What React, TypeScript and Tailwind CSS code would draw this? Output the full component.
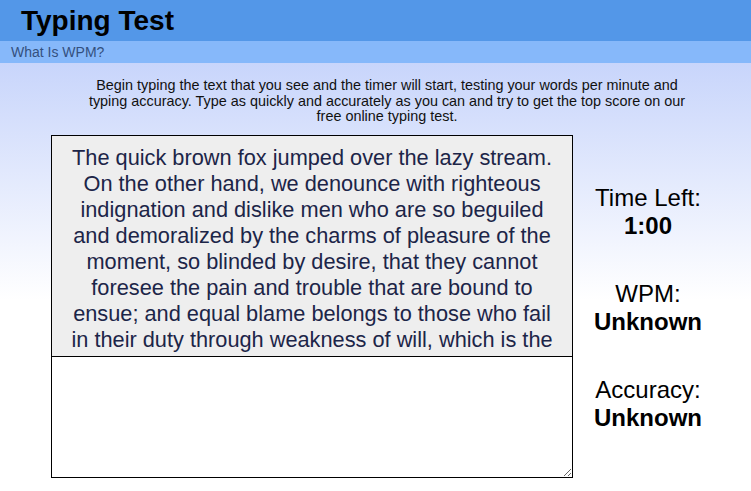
const passage =
  "The quick brown fox jumped over the lazy stream. On the other hand, we denounce with righteous indignation and dislike men who are so beguiled and demoralized by the charms of pleasure of the moment, so blinded by desire, that they cannot foresee the pain and trouble that are bound to ensue; and equal blame belongs to those who fail in their duty through weakness of will, which is the same as saying through shrinking from toil and pain.";

const Stat = ({ label, value }: { label: string; value: string }) => (
  <div className="text-center text-[24px] leading-[28px] text-black">
    <p>{label}</p>
    <p className="font-bold">{value}</p>
  </div>
);

export default function App() {
  return (
    <div className="min-h-[491px] bg-[linear-gradient(to_bottom,#c8d5fb_63px,#ffffff_300px)] font-['Liberation_Sans',Arial,sans-serif]">
      {/* Header */}
      <header className="h-[41px] bg-[#5397e8] pl-[21px] flex items-center">
        <h1 className="text-[28px] font-bold text-black leading-none">Typing Test</h1>
      </header>

      {/* Nav */}
      <nav className="h-[22px] bg-[#86b8fa] pl-[11px] flex items-center">
        <a className="text-[14px] text-[#34507e]">What Is WPM?</a>
      </nav>

      <div className="ml-[51px] w-[672px]">
        {/* Intro */}
        <p className="mx-auto mt-[15px] w-[612px] text-center text-[14.4px] leading-[15.5px] text-[#111]">
          Begin typing the text that you see and the timer will start, testing your words per minute and
          typing accuracy. Type as quickly and accurately as you can and try to get the top score on our
          free online typing test.
        </p>

        <div className="mt-[10px] flex">
          {/* Test area */}
          <div className="w-[522px] flex flex-col">
            <div className="h-[222px] overflow-hidden border border-black bg-[#eeeeee] px-[15px] pt-[9px] text-center text-[21.75px] leading-[26px] text-[#1c2548]">
              {passage}
            </div>
            <textarea className="block h-[121px] w-[522px] border border-t-0 border-black bg-white outline-none resize" />
          </div>

          {/* Stats */}
          <div className="w-[150px] pt-[4px] flex flex-col justify-center gap-[40px]">
            <Stat label="Time Left:" value="1:00" />
            <Stat label="WPM:" value="Unknown" />
            <Stat label="Accuracy:" value="Unknown" />
          </div>
        </div>
      </div>
    </div>
  );
}
